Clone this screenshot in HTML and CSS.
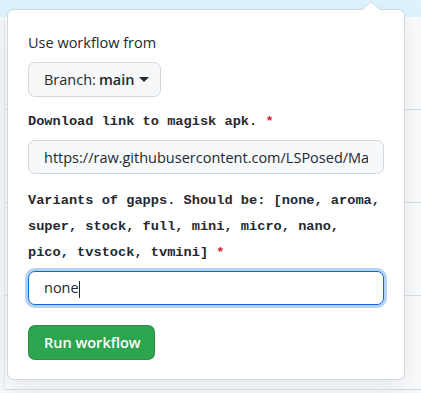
FILE: index.html
```html
<!DOCTYPE html>
<html lang="en">
<head>
  <meta charset="UTF-8">
  <title>Run workflow</title>
  <link rel="stylesheet" href="styles.css">
</head>
<body>
  <div class="page">
    <div class="flash"></div>
    <div class="runs">
      <div class="run-row"></div>
      <div class="run-row"></div>
      <div class="run-row"></div>
      <div class="run-row last"></div>
    </div>
  </div>

  <!-- Dropdown popover for workflow dispatch -->
  <form class="popover">
    <p class="popover-title">Use workflow from</p>
    <button type="button" class="btn-branch">
      Branch: <strong>main</strong>
      <span class="dropdown-caret"></span>
    </button>

    <div class="form-group">
      <label class="input-label">Download link to magisk apk. <span class="required">*</span></label>
      <input type="text" class="form-control" value="https://raw.githubusercontent.com/LSPosed/MagiskOnWSA/main/magisk.apk">
    </div>

    <div class="form-group">
      <label class="input-label">Variants of gapps. Should be: [none, aroma, super, stock, full, mini, micro, nano, pico, tvstock, tvmini] <span class="required">*</span></label>
      <div class="form-control focused">none<span class="text-caret"></span></div>
    </div>

    <button type="button" class="btn-primary">Run workflow</button>
  </form>
</body>
</html>
```

FILE: styles.css
```css
/* Base */
* {
  margin: 0;
  padding: 0;
  box-sizing: border-box;
}

body {
  font-family: "Open Sans", "Liberation Sans", sans-serif;
  font-size: 14.5px;
  color: #24292f;
  background-color: #f6f8fa;
  position: relative;
  height: 393px;
  overflow: hidden;
}

/* Page behind the popover */
.flash {
  height: 17px;
  background-color: #ddf4ff;
}

.runs {
  margin-left: 4px;
  border-left: 1px solid #e6e9ec;
  background-color: #fafbfc;
}

.run-row {
  height: 93px;
  border-bottom: 1px solid #d8dee4;
}

.run-row.last {
  height: 94px;
}

/* Popover */
.popover {
  position: absolute;
  top: 9px;
  left: 7px;
  width: 398px;
  padding: 22px 20px 19px;
  background-color: #ffffff;
  border: 1px solid #d0d7de;
  border-radius: 7px;
  box-shadow: 0 8px 24px rgba(140, 149, 159, 0.2);
}

.popover::before,
.popover::after {
  content: "";
  position: absolute;
  left: 353px;
  border: 10px solid transparent;
  border-top-width: 0;
}

.popover::before {
  top: -9px;
  border-bottom: 9px solid #d0d7de;
}

.popover::after {
  top: -8px;
  border-bottom: 9px solid #ffffff;
}

.popover-title {
  line-height: 21px;
}

/* Branch select button */
.btn-branch {
  display: inline-flex;
  align-items: center;
  gap: 3px;
  margin-top: 9px;
  height: 35px;
  padding: 0 11px 0 15px;
  font-family: inherit;
  font-size: 14.5px;
  color: #24292f;
  background-color: #f6f8fa;
  border: 1px solid #d0d7de;
  border-radius: 7px;
}

.btn-branch strong {
  font-weight: 600;
}

.dropdown-caret {
  display: inline-block;
  margin-left: 2px;
  border-top: 5px solid #24292f;
  border-left: 5px solid transparent;
  border-right: 5px solid transparent;
}

/* Inputs */
.form-group {
  margin-top: 12px;
}

.form-group + .form-group {
  margin-top: 14px;
}

.input-label {
  display: block;
  font-family: "Liberation Mono", "DejaVu Sans Mono", monospace;
  font-size: 13.65px;
  font-weight: 700;
  line-height: 26px;
  color: #24292f;
}

.required {
  color: #cf222e;
}

.form-control {
  display: block;
  width: 100%;
  height: 34px;
  margin-top: 5px;
  padding: 0 15px;
  font-family: inherit;
  font-size: 14.5px;
  line-height: 32px;
  color: #24292f;
  background-color: #f6f8fa;
  border: 1px solid #d0d7de;
  border-radius: 7px;
  outline: none;
}

.form-control.focused {
  background-color: #ffffff;
  border-color: #0969da;
  box-shadow: 0 0 0 3px rgba(9, 105, 218, 0.3);
}

.text-caret {
  display: inline-block;
  width: 1px;
  height: 17px;
  vertical-align: middle;
  background-color: #24292f;
}

/* Primary action */
.btn-primary {
  display: block;
  margin-top: 20px;
  height: 35px;
  padding: 0 13px 0 15px;
  font-family: inherit;
  font-size: 14.5px;
  font-weight: 600;
  color: #ffffff;
  background-color: #2da44e;
  border: 1px solid rgba(27, 31, 36, 0.15);
  border-radius: 7px;
}
```
